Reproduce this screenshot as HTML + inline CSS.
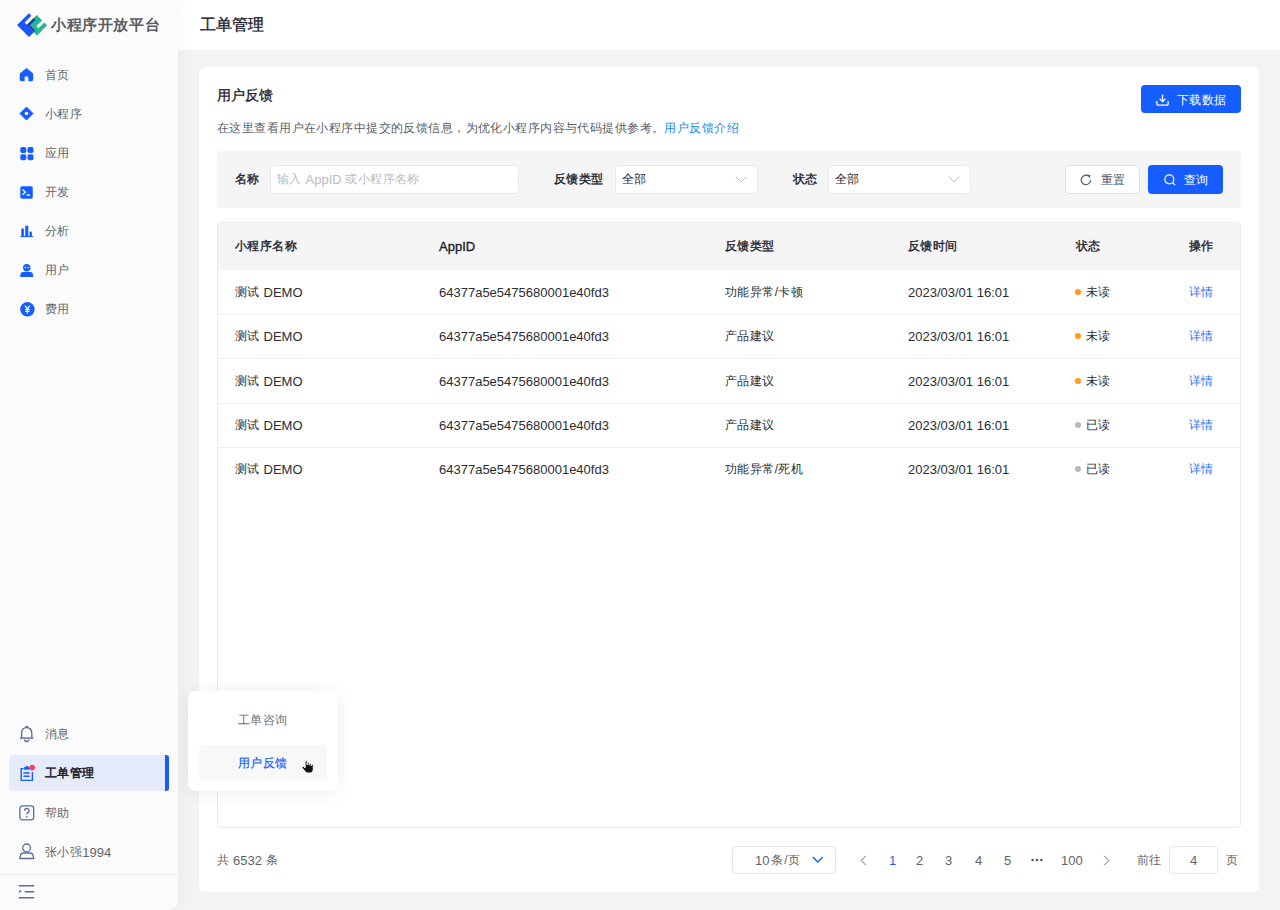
<!DOCTYPE html>
<html><head><meta charset="utf-8">
<style>
*{box-sizing:border-box;margin:0;padding:0}
html,body{width:1280px;height:910px;overflow:hidden}
body{font-family:"Liberation Sans",sans-serif;background:#f3f3f3;position:relative;color:#1d2129;font-size:13px}
.abs{position:absolute}
.t{position:absolute;white-space:nowrap;line-height:20px;height:20px;font-size:13px;color:#2a2d33}
.c{font-size:12px;letter-spacing:.43px}
.b{-webkit-text-stroke:.35px currentColor}
.l{position:relative;top:1px}
#side{position:absolute;left:0;top:0;width:178px;height:910px;background:#fbfbfb;border-radius:0 10px 10px 0;box-shadow:3px 0 14px rgba(0,0,0,0.035);z-index:3}
#hdr{position:absolute;left:150px;top:0;width:1130px;height:50px;background:#fff;z-index:1}
#card{position:absolute;left:199px;top:67px;width:1060px;height:825px;background:#fff;border-radius:6px}
.mtx{position:absolute;left:45px;line-height:20px;height:20px;white-space:nowrap;color:#63666c}
svg{position:absolute;overflow:visible}
</style></head>
<body>
<div id="side">
  <svg style="left:16px;top:12px" width="32" height="26" viewBox="0 0 1120 910">
    <g transform="rotate(45)">
      <path d="M590 -440 H855 V-156 H955 V-440 H1100 V58 H590 Z" fill="#28b596"/>
      <path d="M350 -290 H470 V46 H940 V297 H350 Z" fill="#1a55ff"/>
      <path d="M588 -290 H675 V-14 H940 V46 H588 Z" fill="#1a3fb0"/>
    </g>
  </svg>
  <div class="t" style="left:51px;top:14px;font-size:15px;font-weight:700;letter-spacing:.6px;color:#5a5d63;line-height:22px;height:22px">小程序开放平台</div>

  <!-- top menu icons -->
  <svg style="left:20px;top:68px" width="13" height="13" viewBox="0 0 13 13"><path d="M6.5 0.2 L13 5.6 V11.8 a1.2 1.2 0 0 1 -1.2 1.2 H8.6 V10.2 a2.1 2.1 0 0 0 -4.2 0 V13 H1.2 a1.2 1.2 0 0 1 -1.2 -1.2 V5.6 Z" fill="#165dff" stroke="#165dff" stroke-width="0.4" stroke-linejoin="round"/></svg>
  <div class="mtx c" style="top:64.5px">首页</div>

  <svg style="left:20px;top:107px" width="13" height="13" viewBox="0 0 13 13"><path d="M6.5 0 L13 6.5 L6.5 13 L0 6.5 Z" fill="#165dff" stroke="#165dff" stroke-width="1" stroke-linejoin="round"/><circle cx="6.5" cy="6.5" r="1.8" fill="#fafafa"/></svg>
  <div class="mtx c" style="top:103.5px">小程序</div>

  <svg style="left:20px;top:146.5px" width="14" height="14" viewBox="0 0 14 14"><rect x="0.3" y="0" width="6" height="6" rx="1.8" fill="#165dff"/><rect x="7.5" y="0" width="6" height="6" rx="1.8" fill="#165dff"/><rect x="0.3" y="7.2" width="6" height="6" rx="1.8" fill="#165dff"/><rect x="7.5" y="7.2" width="6" height="6" rx="1.8" fill="#165dff"/></svg>
  <div class="mtx c" style="top:142.5px">应用</div>

  <svg style="left:20px;top:185.5px" width="13" height="13" viewBox="0 0 13 13"><rect x="0.3" y="0.2" width="12.5" height="12.5" rx="1.8" fill="#165dff"/><path d="M2.6 3.6 L5.4 6.2 L2.6 8.8" stroke="#fff" stroke-width="1.3" fill="none"/><rect x="6.6" y="8.4" width="3.4" height="1.4" fill="#fff"/></svg>
  <div class="mtx c" style="top:181.5px">开发</div>

  <svg style="left:20px;top:225px" width="14" height="13" viewBox="0 0 14 13"><rect x="1.3" y="3.6" width="2.6" height="7.6" fill="#165dff"/><rect x="5.2" y="0.8" width="3.1" height="10.4" rx="0.5" fill="#165dff"/><rect x="9.5" y="6.6" width="2.4" height="4.6" fill="#165dff"/><rect x="0.5" y="11" width="12.5" height="1.1" fill="#165dff"/></svg>
  <div class="mtx c" style="top:220.5px">分析</div>

  <svg style="left:20px;top:264px" width="14" height="14" viewBox="0 0 14 14"><circle cx="6.7" cy="3.7" r="3.7" fill="#165dff"/><circle cx="5.3" cy="3.6" r="0.75" fill="#fff"/><circle cx="8.1" cy="3.6" r="0.75" fill="#fff"/><path d="M2.6 8 H10.8 Q12.3 8 12.7 9.6 L13.3 12.9 H0.1 L0.7 9.6 Q1.1 8 2.6 8 Z" fill="#165dff"/></svg>
  <div class="mtx c" style="top:259.5px">用户</div>

  <svg style="left:19.5px;top:302px" width="15" height="15" viewBox="0 0 15 15"><circle cx="7.4" cy="7.3" r="7.2" fill="#165dff"/><path d="M4.8 3.6 L7.4 6.6 L10 3.6 M7.4 6.6 V11.6 M5.2 7.4 H9.6 M5.2 9.4 H9.6" stroke="#fff" stroke-width="1.2" fill="none"/></svg>
  <div class="mtx c" style="top:298.5px">费用</div>

  <!-- bottom menu -->
  <svg style="left:19px;top:725px" width="16" height="18" viewBox="0 0 16 18"><path d="M2.6 13 V8.2 C2.6 4.8 4.8 2.7 7.7 2.7 C10.6 2.7 12.8 4.8 12.8 8.2 V13" stroke="#5a6e97" stroke-width="1.3" fill="none"/><path d="M1 13.1 H14.4" stroke="#5a6e97" stroke-width="1.4"/><path d="M6.5 2.6 a1.2 1.2 0 0 1 2.4 0" stroke="#5a6e97" stroke-width="1.2" fill="none"/><path d="M5.6 14.4 a2.1 2.1 0 0 0 4.2 0" stroke="#5a6e97" stroke-width="1.3" fill="none"/></svg>
  <div class="mtx c" style="top:724px">消息</div>

  <div class="abs" style="left:9px;top:755px;width:160px;height:36px;background:#e5ebfb;border-radius:4px 0 0 4px"></div>
  <div class="abs" style="left:165px;top:755px;width:4px;height:36px;background:#165dff;border-radius:0 3px 3px 0"></div>
  <svg style="left:20px;top:764px" width="15" height="18" viewBox="0 0 15 18"><path d="M3.6 4.6 H1.2 V16.4 H12.4 V8" stroke="#165dff" stroke-width="1.4" fill="none"/><path d="M4.3 5.2 V3.6 H5.6 A1.3 1.3 0 0 1 8.2 3.6 H9.4 V5.2 Z" fill="#165dff" stroke="#165dff" stroke-width="0.9"/><path d="M3.4 9 H9.6 M3.4 12.3 H9.6" stroke="#165dff" stroke-width="1.4"/><circle cx="12.2" cy="3.6" r="2.8" fill="#f53f5f"/></svg>
  <div class="mtx c b" style="top:763px;color:#1d2129;-webkit-text-stroke:.5px #1d2129">工单管理</div>

  <svg style="left:18.5px;top:804.5px" width="16" height="16" viewBox="0 0 16 16"><rect x="0.9" y="0.9" width="13.8" height="14" rx="2.6" stroke="#5a6e97" stroke-width="1.3" fill="none"/><path d="M5.5 5.8 A2.3 2.3 0 1 1 8.6 7.9 Q7.8 8.4 7.8 9.6" stroke="#5a6e97" stroke-width="1.3" fill="none"/><circle cx="7.8" cy="11.8" r="0.85" fill="#5a6e97"/></svg>
  <div class="mtx c" style="top:802.5px">帮助</div>

  <svg style="left:19px;top:843px" width="16" height="17" viewBox="0 0 16 17"><circle cx="7.6" cy="4.9" r="3.9" stroke="#5a6e97" stroke-width="1.3" fill="none"/><path d="M4.6 10 H10.6 Q13.6 10 14.2 12.6 L14.8 15.5 H0.8 L1.4 12.6 Q2 10 4.6 10 Z" stroke="#5a6e97" stroke-width="1.3" fill="none" stroke-linejoin="round"/></svg>
  <div class="mtx c" style="top:841.5px">张小强<span class="l" style="font-size:13px;letter-spacing:0">1994</span></div>

  <div class="abs" style="left:0;top:874px;width:178px;height:1px;background:#ececec"></div>
  <svg style="left:18px;top:884px" width="17" height="16" viewBox="0 0 17 16"><path d="M0.8 1.7 H16.2 M6.8 7.8 H16.2 M0.8 13.8 H16.2" stroke="#5a6e97" stroke-width="1.5"/><path d="M1 6.6 H4 L1 9.2 Z" fill="#5a6e97"/></svg>
</div>

<div id="hdr">
  <div class="t b" style="left:50px;top:14px;font-size:16px;color:#1d2129;line-height:22px;height:22px">工单管理</div>
</div>

<div id="card"></div>
<div id="content" class="abs" style="left:0;top:0;width:1280px;height:910px;z-index:2">
  <div class="t b" style="left:217px;top:85px;font-size:14px;color:#1d2129">用户反馈</div>
  <div class="t c" style="left:217px;top:118px;color:#5c6066">在这里查看用户在小程序中提交的反馈信息，为优化小程序内容与代码提供参考。<span style="color:#1e88f5">用户反馈介绍</span></div>
  <div class="abs" style="left:1141px;top:85px;width:100px;height:28px;background:#165dff;border-radius:4px"></div>
  <svg style="left:1156px;top:94px" width="13" height="12" viewBox="0 0 13 12"><path d="M6.5 0.5 V7.6 M3.6 4.8 L6.5 7.7 L9.4 4.8 M0.9 7 V9.9 a1.2 1.2 0 0 0 1.2 1.2 H10.9 a1.2 1.2 0 0 0 1.2 -1.2 V7" stroke="#fff" stroke-width="1.3" fill="none"/></svg>
  <div class="t c" style="left:1177px;top:89.5px;color:#fff">下载数据</div>

  <!-- filter bar -->
  <div class="abs" style="left:217px;top:151px;width:1024px;height:57px;background:#f5f5f5;border-radius:4px"></div>
  <div class="t c b" style="left:235px;top:169px;color:#1d2129">名称</div>
  <div class="abs" style="left:270px;top:165px;width:249px;height:29px;background:#fff;border:1px solid #e8e9ee;border-radius:4px"></div>
  <div class="t" style="left:277px;top:169px;color:#b9bcc2"><span class="c">输入</span> <span class="l">AppID</span> <span class="c">或小程序名称</span></div>
  <div class="t c b" style="left:554px;top:169px;color:#1d2129">反馈类型</div>
  <div class="abs" style="left:615px;top:165px;width:143px;height:29px;background:#fff;border:1px solid #e8e9ee;border-radius:4px"></div>
  <div class="t c" style="left:622px;top:169px;color:#1d2129">全部</div>
  <svg style="left:735px;top:176px" width="12" height="7" viewBox="0 0 12 7"><path d="M0.8 0.8 L6 5.8 L11.2 0.8" stroke="#b9bdc6" stroke-width="1" fill="none"/></svg>
  <div class="t c b" style="left:793px;top:169px;color:#1d2129">状态</div>
  <div class="abs" style="left:828px;top:165px;width:143px;height:29px;background:#fff;border:1px solid #e8e9ee;border-radius:4px"></div>
  <div class="t c" style="left:835px;top:169px;color:#1d2129">全部</div>
  <svg style="left:948px;top:176px" width="12" height="7" viewBox="0 0 12 7"><path d="M0.8 0.8 L6 5.8 L11.2 0.8" stroke="#b9bdc6" stroke-width="1" fill="none"/></svg>
  <div class="abs" style="left:1065px;top:165px;width:75px;height:29px;background:#fff;border:1px solid #dfe1e6;border-radius:4px"></div>
  <svg style="left:1080px;top:173.5px" width="12" height="12" viewBox="0 0 12 12"><path d="M10.6 6 A4.7 4.7 0 1 1 8.9 2.3" stroke="#4e5969" stroke-width="1.2" fill="none"/><path d="M7.4 0.6 L10.6 1.2 L9.6 4.2 Z" fill="#4e5969"/></svg>
  <div class="t c" style="left:1101px;top:170px;color:#4e5969">重置</div>
  <div class="abs" style="left:1148px;top:165px;width:75px;height:29px;background:#165dff;border-radius:4px"></div>
  <svg style="left:1164px;top:173.5px" width="12" height="12" viewBox="0 0 12 12"><circle cx="5.3" cy="5.3" r="4.5" stroke="#fff" stroke-width="1.2" fill="none"/><path d="M8.6 8.6 L11.2 11.2" stroke="#fff" stroke-width="1.2"/></svg>
  <div class="t c" style="left:1184px;top:170px;color:#fff">查询</div>

  <!-- table -->
  <div class="abs" style="left:217px;top:222px;width:1024px;height:606px;border:1px solid #ebebeb;border-radius:4px;overflow:hidden">
    <div class="abs" style="left:0;top:0;width:1022px;height:47px;background:#f5f5f5"></div>
  </div>
  <div class="t c b" style="left:235px;top:236px;color:#1d2129">小程序名称</div>
  <div class="t b" style="left:439px;top:237px;color:#1d2129">AppID</div>
  <div class="t c b" style="left:725px;top:236px;color:#1d2129">反馈类型</div>
  <div class="t c b" style="left:908px;top:236px;color:#1d2129">反馈时间</div>
  <div class="t c b" style="left:1076px;top:236px;color:#1d2129">状态</div>
  <div class="t c b" style="left:1189px;top:236px;color:#1d2129">操作</div>
  
  <div class="abs" style="left:218px;top:314px;width:1022px;height:1px;background:#eeeeee"></div>
  <div class="t" style="left:235px;top:282.12px"><span class="c">测试</span> <span class="l">DEMO</span></div>
  <div class="t" style="left:439px;top:283.12px">64377a5e5475680001e40fd3</div>
  <div class="t c" style="left:725px;top:282.12px">功能异常/卡顿</div>
  <div class="t" style="left:908px;top:283.12px">2023/03/01 16:01</div>
  <div class="abs" style="left:1075px;top:289.12px;width:6px;height:6px;border-radius:3px;background:#ff9a1f"></div>
  <div class="t c" style="left:1086px;top:282.12px">未读</div>
  <div class="t c" style="left:1189px;top:282.12px;color:#1e6fff">详情</div>
  <div class="abs" style="left:218px;top:358px;width:1022px;height:1px;background:#eeeeee"></div>
  <div class="t" style="left:235px;top:326.38px"><span class="c">测试</span> <span class="l">DEMO</span></div>
  <div class="t" style="left:439px;top:327.38px">64377a5e5475680001e40fd3</div>
  <div class="t c" style="left:725px;top:326.38px">产品建议</div>
  <div class="t" style="left:908px;top:327.38px">2023/03/01 16:01</div>
  <div class="abs" style="left:1075px;top:333.38px;width:6px;height:6px;border-radius:3px;background:#ff9a1f"></div>
  <div class="t c" style="left:1086px;top:326.38px">未读</div>
  <div class="t c" style="left:1189px;top:326.38px;color:#1e6fff">详情</div>
  <div class="abs" style="left:218px;top:403px;width:1022px;height:1px;background:#eeeeee"></div>
  <div class="t" style="left:235px;top:370.62px"><span class="c">测试</span> <span class="l">DEMO</span></div>
  <div class="t" style="left:439px;top:371.62px">64377a5e5475680001e40fd3</div>
  <div class="t c" style="left:725px;top:370.62px">产品建议</div>
  <div class="t" style="left:908px;top:371.62px">2023/03/01 16:01</div>
  <div class="abs" style="left:1075px;top:377.62px;width:6px;height:6px;border-radius:3px;background:#ff9a1f"></div>
  <div class="t c" style="left:1086px;top:370.62px">未读</div>
  <div class="t c" style="left:1189px;top:370.62px;color:#1e6fff">详情</div>
  <div class="abs" style="left:218px;top:447px;width:1022px;height:1px;background:#eeeeee"></div>
  <div class="t" style="left:235px;top:414.88px"><span class="c">测试</span> <span class="l">DEMO</span></div>
  <div class="t" style="left:439px;top:415.88px">64377a5e5475680001e40fd3</div>
  <div class="t c" style="left:725px;top:414.88px">产品建议</div>
  <div class="t" style="left:908px;top:415.88px">2023/03/01 16:01</div>
  <div class="abs" style="left:1075px;top:421.88px;width:6px;height:6px;border-radius:3px;background:#b8b8b8"></div>
  <div class="t c" style="left:1086px;top:414.88px">已读</div>
  <div class="t c" style="left:1189px;top:414.88px;color:#1e6fff">详情</div>
  
  <div class="t" style="left:235px;top:459.12px"><span class="c">测试</span> <span class="l">DEMO</span></div>
  <div class="t" style="left:439px;top:460.12px">64377a5e5475680001e40fd3</div>
  <div class="t c" style="left:725px;top:459.12px">功能异常/死机</div>
  <div class="t" style="left:908px;top:460.12px">2023/03/01 16:01</div>
  <div class="abs" style="left:1075px;top:466.12px;width:6px;height:6px;border-radius:3px;background:#b8b8b8"></div>
  <div class="t c" style="left:1086px;top:459.12px">已读</div>
  <div class="t c" style="left:1189px;top:459.12px;color:#1e6fff">详情</div>

  <!-- pagination -->
  <div class="t" style="left:217px;top:850px;color:#5f6368"><span class="c">共</span> <span class="l">6532</span> <span class="c">条</span></div>
  <div class="abs" style="left:732px;top:846px;width:104px;height:28px;background:#fff;border:1px solid #e3e5ea;border-radius:4px"></div>
  <div class="t" style="left:755px;top:850px;color:#5f6368"><span class="l">10</span><span class="c" style="margin-left:2px;letter-spacing:.8px">条/页</span></div>
  <svg style="left:812px;top:856px" width="12" height="8" viewBox="0 0 12 8"><path d="M0.8 1 L5.8 6 L10.8 1" stroke="#165dff" stroke-width="1.3" fill="none"/></svg>
  <svg style="left:860px;top:855px" width="7" height="11" viewBox="0 0 7 11"><path d="M5.8 0.8 L1.2 5.5 L5.8 10.2" stroke="#6b6f76" stroke-width="1" fill="none"/></svg>
  <div class="t" style="left:889px;top:851px;color:#165dff">1</div>
  <div class="t" style="left:916px;top:851px;color:#5f6368">2</div>
  <div class="t" style="left:945px;top:851px;color:#5f6368">3</div>
  <div class="t" style="left:975px;top:851px;color:#5f6368">4</div>
  <div class="t" style="left:1004px;top:851px;color:#5f6368">5</div>
  <svg style="left:1031px;top:858px" width="12" height="4" viewBox="0 0 12 4"><circle cx="1.6" cy="2" r="1.3" fill="#4e5969"/><circle cx="6" cy="2" r="1.3" fill="#4e5969"/><circle cx="10.4" cy="2" r="1.3" fill="#4e5969"/></svg>
  <div class="t" style="left:1061px;top:851px;color:#5f6368">100</div>
  <svg style="left:1103px;top:855px" width="7" height="11" viewBox="0 0 7 11"><path d="M1.2 0.8 L5.8 5.5 L1.2 10.2" stroke="#6b6f76" stroke-width="1" fill="none"/></svg>
  <div class="t c" style="left:1137px;top:850px;color:#5f6368">前往</div>
  <div class="abs" style="left:1169px;top:846px;width:49px;height:28px;background:#fff;border:1px solid #e3e5ea;border-radius:4px"></div>
  <div class="t" style="left:1190px;top:851px;color:#5f6368">4</div>
  <div class="t c" style="left:1226px;top:850px;color:#5f6368">页</div>
</div>

<!-- popup -->
<div class="abs" style="left:188px;top:691px;width:150px;height:100px;background:#fff;border-radius:8px;box-shadow:0 2px 18px rgba(0,0,0,0.08);z-index:5">
  <div class="t c" style="left:50px;top:19px;color:#6b6e75">工单咨询</div>
  <div class="abs" style="left:11px;top:54px;width:128px;height:35px;background:#f8f8f8;border-radius:4px"></div>
  <div class="t c b" style="left:50px;top:62px;color:#165dff;-webkit-text-stroke:.2px #165dff">用户反馈</div>
  <svg style="left:301px;top:758px;position:fixed" width="14" height="16" viewBox="0 0 14 16"><path d="M4.2 3.8 a1 1 0 0 1 2 0 V7 V5.6 a1 1 0 0 1 2 0 V7.2 V6.4 a1 1 0 0 1 2 0 V7.8 V7.2 a1 1 0 0 1 2 0 V11.5 Q12.2 15 9 15 H7 Q5.4 15 4.3 13.6 L1.3 10 a1 1 0 0 1 1.5 -1.3 L4.2 10 Z" fill="#111" stroke="#fff" stroke-width="0.8"/></svg>
</div>

</body></html>
